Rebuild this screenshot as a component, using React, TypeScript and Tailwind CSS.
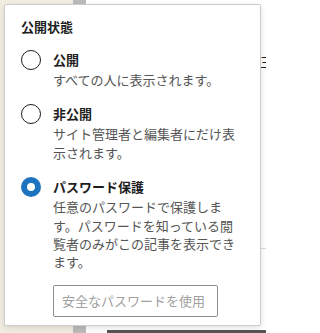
import React from "react";

const options = [
  { id: "public", label: "公開", help: "すべての人に表示されます。" },
  { id: "private", label: "非公開", help: "サイト管理者と編集者にだけ表示されます。" },
  {
    id: "password",
    label: "パスワード保護",
    help: "任意のパスワードで保護します。パスワードを知っている閲覧者のみがこの記事を表示できます。",
  },
];

function Radio({ checked }: { checked: boolean }) {
  if (checked) {
    return (
      <span className="mt-[-1px] flex h-[20px] w-[20px] shrink-0 items-center justify-center rounded-full bg-[#1e73be]">
        <span className="h-[8px] w-[8px] rounded-full bg-white" />
      </span>
    );
  }
  return <span className="mt-[-1px] h-[20px] w-[20px] shrink-0 rounded-full border-[1.5px] border-[#1e1e1e] bg-white" />;
}

export default function App() {
  const selected = "password";

  return (
    <div
      className="relative h-[333px] w-[266px] overflow-hidden bg-white"
      style={{ fontFamily: '"Noto Sans CJK JP", "Noto Sans", sans-serif' }}
    >
      {/* page behind the popover */}
      <div className="flex h-full">
        <div className="w-[73px] bg-[#f3eee2]" />
        <div className="w-[13px] bg-[#bcbcbc]" />
        <div className="flex flex-1 flex-col">
          <div className="h-[248px]" />
          <div className="ml-auto h-px w-[8px] bg-[#dcdcdc]" />
          <div className="flex-1" />
          <div className="ml-[21px] h-[3px] bg-[#555]" />
        </div>
      </div>
      <span className="absolute left-[260px] top-[55px] text-[13px] leading-[14px] text-[#1e1e1e]">三</span>

      {/* popover */}
      <div className="absolute left-[4px] top-[4px] h-[322px] w-[257px] rounded-[2px] border border-[#cccccc] bg-white px-[16px] pt-[13px] shadow-[0_2px_6px_rgba(0,0,0,0.12)]">
        <h2 className="text-[13px] font-semibold leading-[18px] text-[#1e1e1e]">公開状態</h2>
        <div className="mt-[15px] flex flex-col gap-[16px]">
          {options.map((o) => (
            <label key={o.id} className="flex items-start gap-[12px]">
              <Radio checked={o.id === selected} />
              <div className="w-[184px]">
                <div className="text-[13px] font-bold leading-[18px] text-[#1e1e1e]">{o.label}</div>
                <p className="mt-[2px] text-[13px] leading-[18.4px] text-[#555]">{o.help}</p>
                {o.id === "password" && (
                  <input
                    type="text"
                    placeholder="安全なパスワードを使用"
                    className="mt-[13px] h-[32px] w-[165px] rounded-[2px] border border-[#8c8f94] px-[8px] text-[13px] text-[#1e1e1e] placeholder:text-[#a0a0a0]"
                  />
                )}
              </div>
            </label>
          ))}
        </div>
      </div>
    </div>
  );
}
